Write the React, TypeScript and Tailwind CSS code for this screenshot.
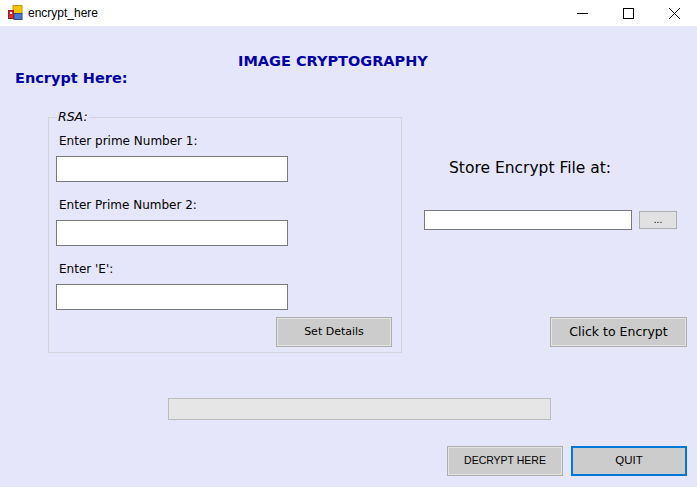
import React from "react";

const comic = { fontFamily: '"DejaVu Sans", "Open Sans", sans-serif' };
const ui = { fontFamily: '"Liberation Sans", "Noto Sans", sans-serif' };

function WinButton({ children, className = "", textClass = "" }: { children: React.ReactNode; className?: string; textClass?: string }) {
  return (
    <div className={`border border-[#adadad] bg-[#cccccc] shadow-[inset_0_0_0_1px_#e3e3e3] flex items-center justify-center text-black ${className}`}>
      <span className={textClass}>{children}</span>
    </div>
  );
}

export default function App() {
  return (
    <div className="w-[697px] h-[487px] bg-white overflow-hidden">
      {/* Title bar */}
      <div className="h-[26px] bg-white flex items-center">
        <svg width="16" height="16" viewBox="0 0 16 16" className="ml-[8px]">
          <rect x="5" y="0.5" width="9" height="8" fill="#f5c400" stroke="#c89a00" />
          <rect x="6" y="8.5" width="8" height="6" fill="#4a78d0" stroke="#2a4f9a" />
          <rect x="0.5" y="5.5" width="5" height="8" fill="#d83030" stroke="#9a1a1a" />
          <rect x="2" y="7" width="2" height="2" fill="#fff" />
        </svg>
        <span className="ml-[4px] text-[12px] text-black" style={ui}>encrypt_here</span>
        <div className="ml-auto flex items-center h-full">
          <div className="w-[46px] h-full flex items-center justify-center">
            <svg width="11" height="11" viewBox="0 0 11 11"><line x1="0" y1="5.5" x2="11" y2="5.5" stroke="#000" strokeWidth="1" /></svg>
          </div>
          <div className="w-[46px] h-full flex items-center justify-center">
            <svg width="11" height="11" viewBox="0 0 11 11"><rect x="0.5" y="0.5" width="10" height="10" fill="none" stroke="#000" strokeWidth="1" /></svg>
          </div>
          <div className="w-[46px] h-full flex items-center justify-center">
            <svg width="11" height="11" viewBox="0 0 11 11"><path d="M0 0 L11 11 M11 0 L0 11" stroke="#000" strokeWidth="1" /></svg>
          </div>
        </div>
      </div>

      {/* Body */}
      <div className="h-[461px] bg-[#e6e6fa] flex flex-col" style={comic}>
        <div className="pl-[238px] pt-[26px] text-[14.5px] font-bold leading-[18px] text-[#0000a8]">IMAGE CRYPTOGRAPHY</div>
        <div className="pl-[15px] -mt-[1px] text-[14.5px] font-bold leading-[18px] text-[#0000a8]">Encrypt Here:</div>

        <div className="flex mt-[29px]">
          {/* Group box */}
          <fieldset className="ml-[48px] w-[354px] h-[243px] border border-[#d3d3dc] -mt-[6px] pl-[7px] flex flex-col">
            <legend className="ml-[1px] px-[1px] text-[12.5px] italic leading-[14px] text-black">RSA:</legend>
            <div className="mt-[9px] pl-[3px] text-[12px] leading-[16px] text-black">Enter prime Number 1:</div>
            <div className="mt-[7px] w-[232px] h-[26px] bg-white border border-[#7a7a7a]" />
            <div className="mt-[15px] pl-[3px] text-[12px] leading-[16px] text-black">Enter Prime Number 2:</div>
            <div className="mt-[7px] w-[232px] h-[26px] bg-white border border-[#7a7a7a]" />
            <div className="mt-[15px] pl-[3px] text-[12px] leading-[16px] text-black">Enter 'E':</div>
            <div className="mt-[7px] w-[232px] h-[26px] bg-white border border-[#7a7a7a]" />
            <WinButton className="mt-[7px] ml-[220px] w-[116px] h-[30px]" textClass="text-[11px]">Set Details</WinButton>
          </fieldset>

          {/* Right column */}
          <div className="ml-[22px] flex flex-col">
            <div className="mt-[42px] pl-[25px] text-[15.5px] leading-[20px] text-black">Store Encrypt File at:</div>
            <div className="mt-[32px] flex items-start">
              <div className="w-[208px] h-[20px] bg-white border border-[#7a7a7a]" />
              <div className="ml-[7px] mt-[1px] w-[38px] h-[18px] bg-[#e1e1e1] border border-[#adadad] flex items-center justify-center text-[10px] leading-none text-black" style={ui}>...</div>
            </div>
            <WinButton className="mt-[87px] ml-[126px] w-[137px] h-[30px]" textClass="text-[12.5px]">Click to Encrypt</WinButton>
          </div>
        </div>

        <div className="mt-[45px] ml-[168px] w-[383px] h-[22px] bg-[#e6e6e6] border border-[#bcbcbc]" />

        <div className="mt-[26px] flex justify-end pr-[10px] gap-[8px]" style={ui}>
          <WinButton className="w-[116px] h-[30px]" textClass="text-[10.5px]">DECRYPT HERE</WinButton>
          <div className="w-[116px] h-[30px] border-2 border-[#0078d7] bg-[#cccccc] flex items-center justify-center text-[11.5px] text-black">QUIT</div>
        </div>
      </div>
    </div>
  );
}
